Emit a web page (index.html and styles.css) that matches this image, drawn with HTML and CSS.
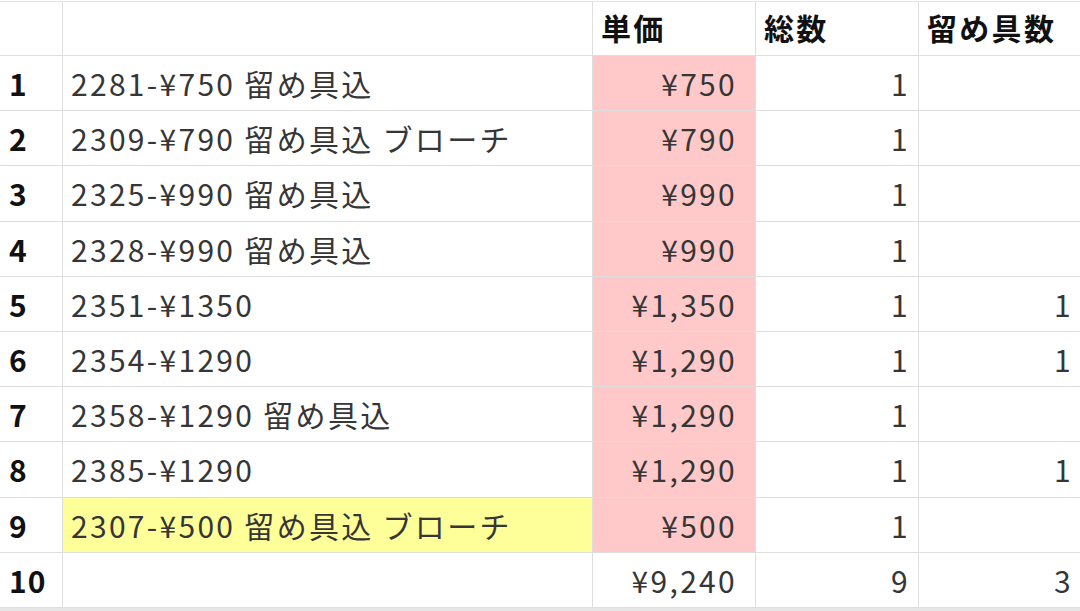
FILE: index.html
```html
<!DOCTYPE html>
<html lang="ja">
<head>
<meta charset="utf-8">
<link rel="stylesheet" href="styles.css">
</head>
<body>
<div class="sheet">
  <div class="c rh"></div><div class="c"></div><div class="c hd">単価</div><div class="c hd">総数</div><div class="c hd">留め具数</div>

  <div class="c rh">1</div><div class="c">2281-¥750 留め具込</div><div class="c num pink">¥750</div><div class="c num">1</div><div class="c num"></div>
  <div class="c rh">2</div><div class="c">2309-¥790 留め具込 ブローチ</div><div class="c num pink">¥790</div><div class="c num">1</div><div class="c num"></div>
  <div class="c rh">3</div><div class="c">2325-¥990 留め具込</div><div class="c num pink">¥990</div><div class="c num">1</div><div class="c num"></div>
  <div class="c rh">4</div><div class="c">2328-¥990 留め具込</div><div class="c num pink">¥990</div><div class="c num">1</div><div class="c num"></div>
  <div class="c rh">5</div><div class="c">2351-¥1350</div><div class="c num pink">¥1,350</div><div class="c num">1</div><div class="c num">1</div>
  <div class="c rh">6</div><div class="c">2354-¥1290</div><div class="c num pink">¥1,290</div><div class="c num">1</div><div class="c num">1</div>
  <div class="c rh">7</div><div class="c">2358-¥1290 留め具込</div><div class="c num pink">¥1,290</div><div class="c num">1</div><div class="c num"></div>
  <div class="c rh">8</div><div class="c">2385-¥1290</div><div class="c num pink">¥1,290</div><div class="c num">1</div><div class="c num">1</div>
  <div class="c rh">9</div><div class="c yellow">2307-¥500 留め具込 ブローチ</div><div class="c num pink">¥500</div><div class="c num">1</div><div class="c num"></div>
  <div class="c rh">10</div><div class="c"></div><div class="c num total">¥9,240</div><div class="c num">9</div><div class="c num">3</div>
</div>
</body>
</html>
```

FILE: styles.css
```css
html, body {
  margin: 0;
  padding: 0;
  background: #ffffff;
  overflow: hidden;
}

.sheet {
  margin-top: 1px;
  width: 1082px;
  display: grid;
  grid-template-columns: 63px 530px 163px 163px 163px;
  grid-template-rows: 54px repeat(10, 55.2px);
  border-top: 1px solid #e4e4e4;
  border-bottom: 3px solid #e6e6e6;
  font-family: "Noto Sans CJK JP", "Noto Sans", sans-serif;
  font-size: 30px;
  color: #363636;
}

.c {
  box-sizing: border-box;
  border-right: 1px solid #dedede;
  border-bottom: 1px solid #dedede;
  display: flex;
  align-items: center;
  padding: 0 8px;
  white-space: nowrap;
  overflow: hidden;
  line-height: 1;
  letter-spacing: 2.3px;
}

.rh {
  font-weight: bold;
  color: #111;
  padding-left: 9px;
  letter-spacing: 1px;
}

.hd {
  font-weight: bold;
  color: #111;
  padding-left: 8px;
  padding-bottom: 3px;
}

.num {
  justify-content: flex-end;
  padding-right: 8px;
}

.pink {
  background: #ffc9c9;
  padding-right: 18px;
}

.total {
  padding-right: 18px;
}

.yellow {
  background: #ffff99;
}
```
